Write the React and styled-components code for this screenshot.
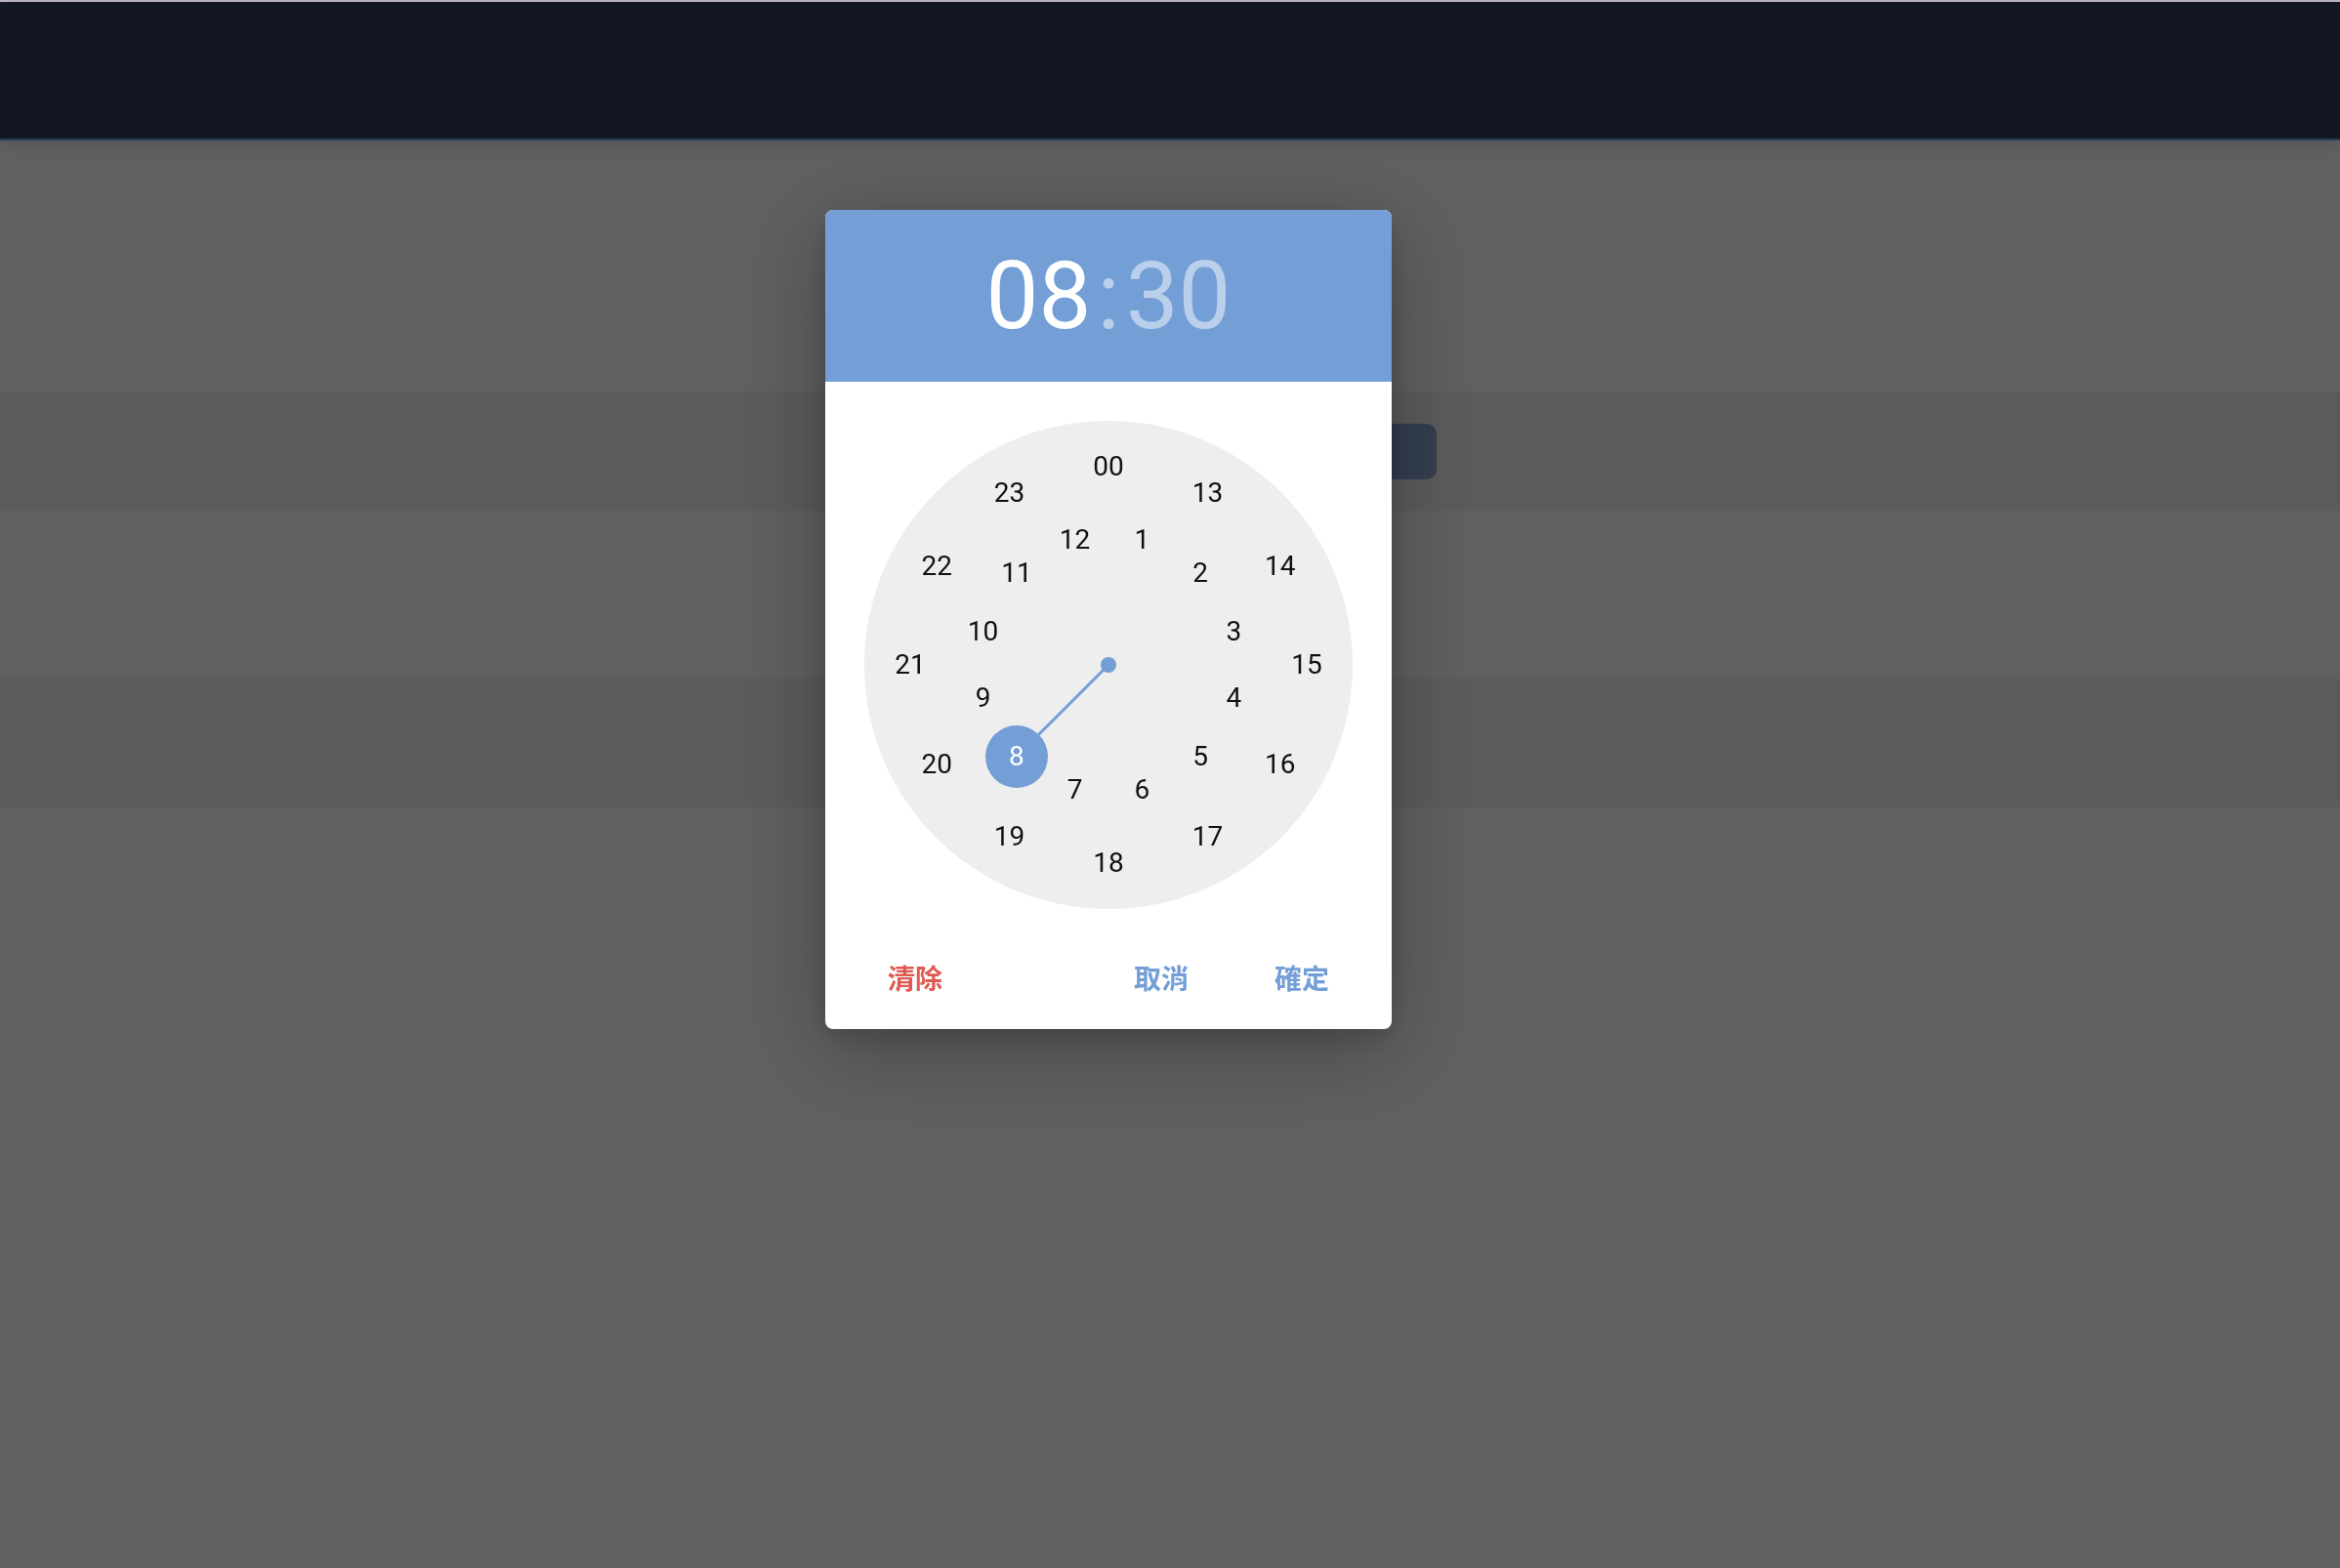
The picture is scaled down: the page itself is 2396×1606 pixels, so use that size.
import React from 'react'
import styled, { createGlobalStyle } from 'styled-components'

const GlobalStyle = createGlobalStyle`
  html, body {
    margin: 0;
    padding: 0;
  }
  body {
    background: #f0f0f0;
    font-family: Roboto, "Noto Sans", "Liberation Sans", sans-serif;
    overflow: hidden;
  }
`

const FACE = 500
const OUTER_R = 203
const INNER_R = 133
const SELECTED = 8

// outer ring: 00 on top, then 13..23 clockwise
const outerHours = ['00', '13', '14', '15', '16', '17', '18', '19', '20', '21', '22', '23']
// inner ring: 1..12, shifted half a step
const innerHours = [1, 2, 3, 4, 5, 6, 7, 8, 9, 10, 11, 12]

const polar = (deg, r) => {
  const rad = (deg * Math.PI) / 180
  return {
    x: FACE / 2 + r * Math.sin(rad),
    y: FACE / 2 - r * Math.cos(rad),
  }
}

const App = () => {
  const handAngle = SELECTED * 30 - 15
  const handEnd = polar(handAngle, INNER_R)

  return (
    <Page>
      <GlobalStyle />
      <TopLine />
      <Header />
      <Content>
        <Row $height={257} />
        <Row $height={122} $shade>
          <RowInner>
            <GhostButton />
          </RowInner>
        </Row>
        <Row $height={172} />
        <Row $height={132} $shade />
      </Content>

      <Overlay>
        <Dialog>
          <TimeHeader>
            <TimePart>08</TimePart>
            <TimePart $dim $colon>:</TimePart>
            <TimePart $dim>30</TimePart>
          </TimeHeader>

          <FaceWrap>
            <Face>
              <Hand viewBox={`0 0 ${FACE} ${FACE}`}>
                <line
                  x1={FACE / 2}
                  y1={FACE / 2}
                  x2={handEnd.x}
                  y2={handEnd.y}
                  stroke="#749ed6"
                  strokeWidth="3"
                />
                <circle cx={FACE / 2} cy={FACE / 2} r="8" fill="#749ed6" />
              </Hand>

              {outerHours.map((label, i) => {
                const p = polar(i * 30, OUTER_R)
                return (
                  <Num key={label} style={{ left: p.x, top: p.y }}>
                    {label}
                  </Num>
                )
              })}

              {innerHours.map((h) => {
                const p = polar(h * 30 - 15, INNER_R)
                return (
                  <Num key={h} $selected={h === SELECTED} style={{ left: p.x, top: p.y }}>
                    {h}
                  </Num>
                )
              })}
            </Face>
          </FaceWrap>

          <Footer>
            <Action $tone="danger" $push>清除</Action>
            <Action>取消</Action>
            <Action>確定</Action>
          </Footer>
        </Dialog>
      </Overlay>
    </Page>
  )
}

export default App

const Page = styled.div`
  min-height: 100vh;
`

const TopLine = styled.div`
  height: 2px;
  background: #bcb6c6;
`

const Header = styled.header`
  height: 140px;
  background: #131722;
  border-bottom: 2px solid #2c4057;
  box-shadow: 0 4px 14px rgba(30, 50, 90, 0.14);
  position: relative;
`

const Content = styled.main`
  display: flex;
  flex-direction: column;
`

const Row = styled.section`
  height: ${(p) => p.$height}px;
  background: ${(p) => (p.$shade ? '#e4e4e4' : 'transparent')};
`

const RowInner = styled.div`
  width: 546px;
  height: 100%;
  margin: 0 auto;
  display: flex;
  justify-content: flex-end;
  align-items: center;
`

const GhostButton = styled.div`
  width: 180px;
  height: 57px;
  border-radius: 10px;
  background: #849dc8;
`

const Overlay = styled.div`
  position: fixed;
  top: 144px;
  left: 0;
  right: 0;
  bottom: 0;
  background: rgba(0, 0, 0, 0.6);
  display: flex;
  justify-content: center;
  align-items: flex-start;
  padding: 71px 126px 0 0;
`

const Dialog = styled.div`
  width: 580px;
  background: #fff;
  border-radius: 8px;
  overflow: hidden;
  box-shadow: 0 20px 90px rgba(0, 0, 0, 0.3), 0 8px 24px rgba(0, 0, 0, 0.14);
`

const TimeHeader = styled.div`
  height: 176px;
  background: #749ed6;
  display: flex;
  justify-content: center;
  align-items: center;
  font-family: Roboto, sans-serif;
  font-size: 96px;
  font-weight: 400;
  color: #fff;
`

const TimePart = styled.span`
  color: ${(p) => (p.$dim ? 'rgba(255, 255, 255, 0.5)' : '#fff')};
  margin: ${(p) => (p.$colon ? '0 6px' : '0')};
`

const FaceWrap = styled.div`
  display: flex;
  justify-content: center;
  padding-top: 40px;
`

const Face = styled.div`
  position: relative;
  width: ${FACE}px;
  height: ${FACE}px;
  border-radius: 50%;
  background: #eeeeee;
`

const Hand = styled.svg`
  position: absolute;
  inset: 0;
  width: 100%;
  height: 100%;
`

const Num = styled.div`
  position: absolute;
  width: 64px;
  height: 64px;
  margin: -32px 0 0 -32px;
  border-radius: 50%;
  display: flex;
  justify-content: center;
  align-items: center;
  font-family: Roboto, sans-serif;
  font-size: 28px;
  line-height: 1;
  color: ${(p) => (p.$selected ? '#fff' : '#111')};
  background: ${(p) => (p.$selected ? '#749ed6' : 'transparent')};
`

const Footer = styled.div`
  display: flex;
  align-items: center;
  gap: 88px;
  padding: 56px 64px 39px;
`

const Action = styled.button`
  border: 0;
  padding: 0;
  background: none;
  font-family: "Noto Sans CJK TC", "Noto Sans CJK SC", sans-serif;
  font-size: 28px;
  font-weight: 700;
  line-height: 1;
  color: ${(p) => (p.$tone === 'danger' ? '#de5a52' : '#749ed6')};
  margin-right: ${(p) => (p.$push ? 'auto' : '0')};
  cursor: pointer;
`
